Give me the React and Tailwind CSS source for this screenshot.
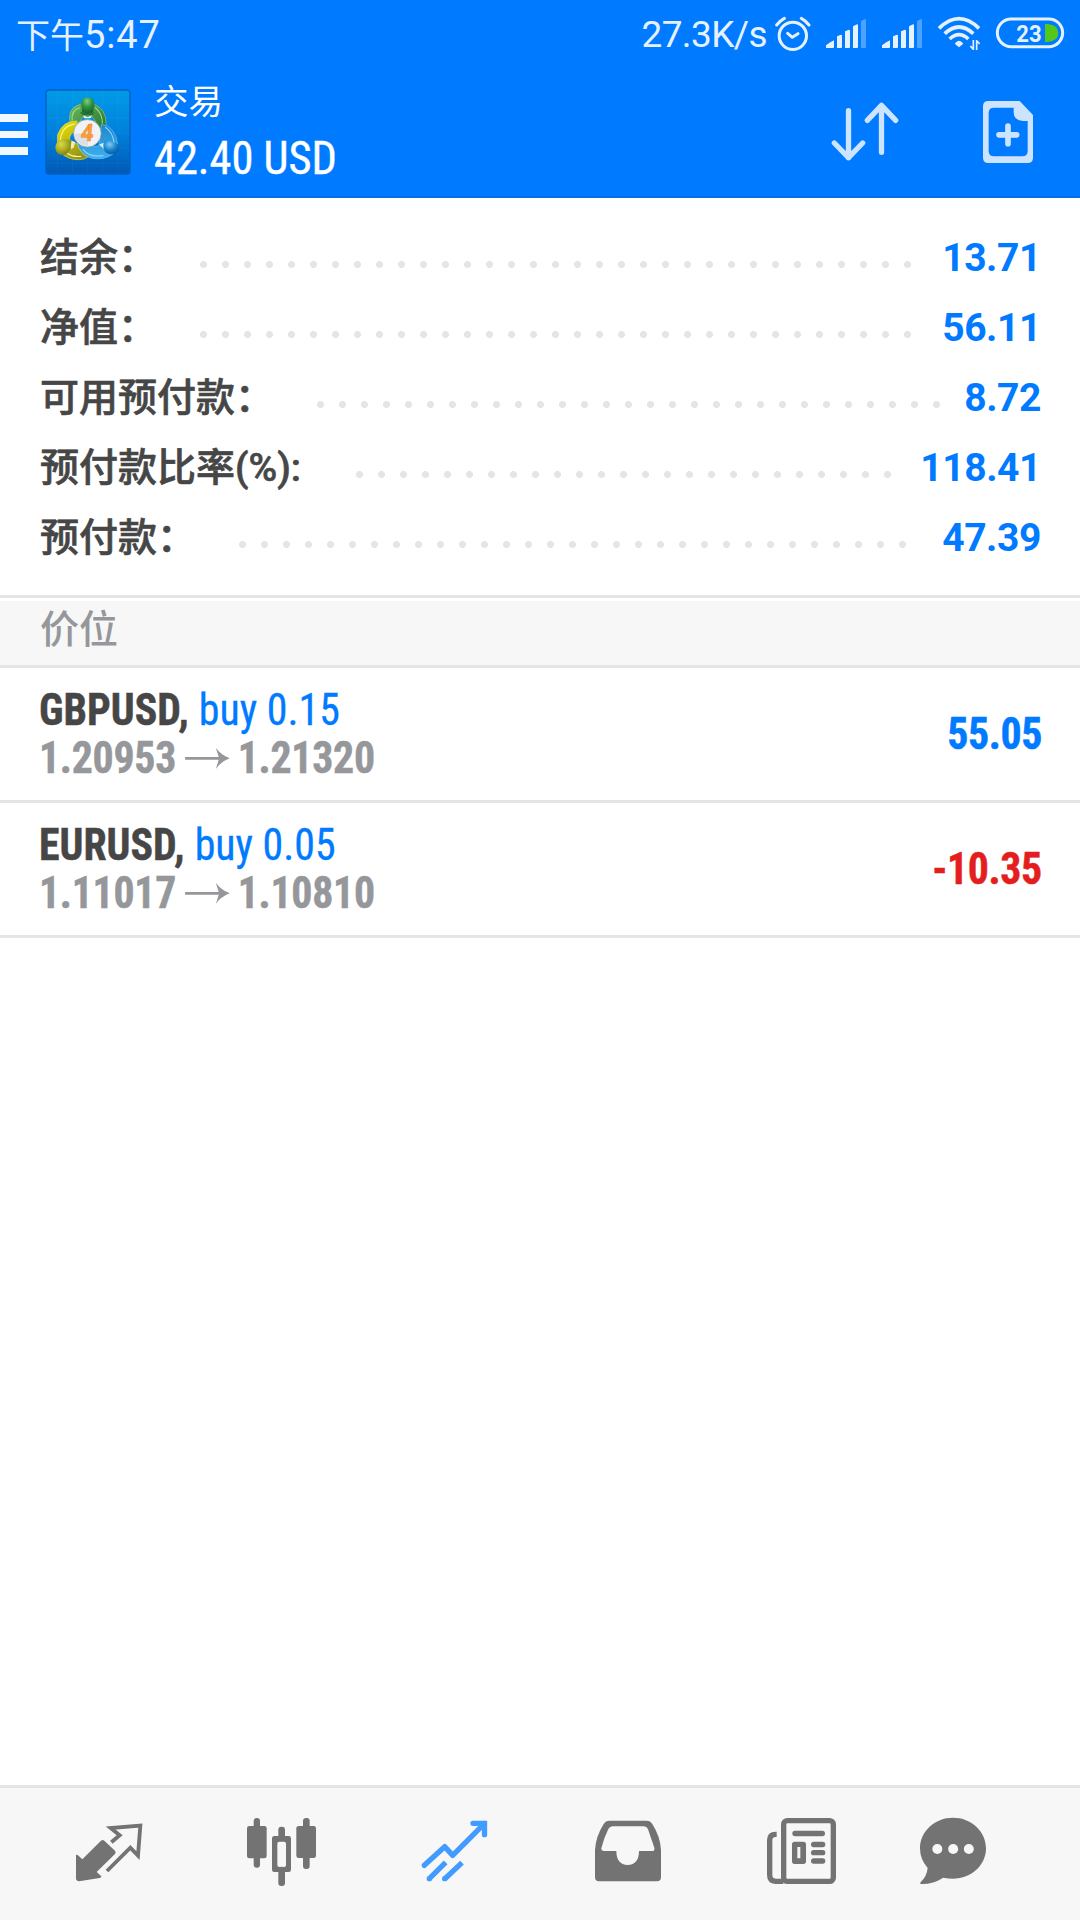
import React from "react";

const summary = [
  { label: "结余：", value: "13.71", labelWidth: "w-[160px]", dotsWidth: "w-[711px]" },
  { label: "净值：", value: "56.11", labelWidth: "w-[160px]", dotsWidth: "w-[711px]" },
  { label: "可用预付款：", value: "8.72", labelWidth: "w-[277px]", dotsWidth: "w-[623px]" },
  { label: "预付款比率(%):", value: "118.41", labelWidth: "w-[316px]", dotsWidth: "w-[535px]" },
  { label: "预付款：", value: "47.39", labelWidth: "w-[199px]", dotsWidth: "w-[667px]" },
];

const positions = [
  { symbol: "GBPUSD", side: "buy 0.15", open: "1.20953", current: "1.21320", profit: "55.05" },
  { symbol: "EURUSD", side: "buy 0.05", open: "1.11017", current: "1.10810", profit: "-10.35" },
];

function AlarmIcon() {
  return (
    <svg viewBox="462 42 111 111" className="h-[37px] w-[37px]" fill="none" stroke="#e5f1ff" strokeWidth="9" strokeLinecap="round" strokeLinejoin="round">
      <circle cx="518.5" cy="104.5" r="41" />
      <path d="M503 97 L517 109 L534 98" />
      <path d="M470 72 Q480 59 493 52 M544 52 Q557 59 567 72" />
    </svg>
  );
}

function SignalIcon() {
  return (
    <svg viewBox="615 51 126 93" className="h-[31px] w-[42px]" fill="#e5f1ff">
      <path d="M618 141 V133 Q630 123 642 118 V138 Q642 141 639 141 Z" />
      <path d="M651 141 V106 L663 101 Q666 101 666 104 V138 Q666 141 663 141 Z" />
      <path d="M675 141 V91 L687 86 Q690 86 690 89 V138 Q690 141 687 141 Z" />
      <path d="M699 141 V76 L711 70 Q714 70 714 73 V138 Q714 141 711 141 Z" />
      <path d="M723 141 V60 L735 54 Q738 54 738 57 V138 Q738 141 735 141 Z" fill="#4da2ff" />
    </svg>
  );
}

function WifiIcon() {
  return (
    <svg viewBox="951 48 132 108" className="h-[36px] w-[44px]" fill="none" stroke="#e5f1ff">
      <path d="M957 88 Q1017 30 1077 88" strokeWidth="11" />
      <path d="M974 104 Q1017 64 1060 104" strokeWidth="11" />
      <path d="M989 120 Q1017 94 1045 120" strokeWidth="11" />
      <path d="M1004 134 Q1017 117 1030 134 L1017 145 Z" fill="#e5f1ff" stroke="none" />
      <path d="M1060 123 V153 M1060 151 L1051 141 M1070 153 V123 M1070 125 L1079 135" strokeWidth="5" />
    </svg>
  );
}

function BatteryIcon() {
  return (
    <svg viewBox="1125 48 210 102" className="h-[34px] w-[70px]">
      <rect x="1132" y="57" width="196" height="83" rx="41.5" fill="none" stroke="#e5f1ff" strokeWidth="9" />
      <path d="M1275 72 H1283 Q1315 75 1315 99 Q1315 123 1283 126 H1275 Z" fill="#55c718" />
      <text x="1189" y="125" fontSize="72" fontWeight="700" fill="#e5f1ff" fontFamily="Roboto, sans-serif" textLength="76" lengthAdjust="spacingAndGlyphs">
        23
      </text>
    </svg>
  );
}

function Logo() {
  return (
    <svg viewBox="47 43 256 256" className="h-[86px] w-[86px]">
      <defs>
        <linearGradient id="tile" x1="0" y1="0" x2="0" y2="1">
          <stop offset="0" stopColor="#009be8" />
          <stop offset="0.5" stopColor="#0081dc" />
          <stop offset="1" stopColor="#0059b4" />
        </linearGradient>
        <linearGradient id="green" x1="0" y1="0" x2="1" y2="1">
          <stop offset="0" stopColor="#6cba5e" />
          <stop offset="1" stopColor="#1c6b2a" />
        </linearGradient>
        <linearGradient id="yellow" x1="0" y1="0" x2="0.6" y2="1">
          <stop offset="0" stopColor="#f3e600" />
          <stop offset="1" stopColor="#94951c" />
        </linearGradient>
        <linearGradient id="sky" x1="0" y1="0" x2="0" y2="1">
          <stop offset="0" stopColor="#1c86cf" />
          <stop offset="1" stopColor="#3fb0ee" />
        </linearGradient>
        <radialGradient id="greenBall" cx="0.45" cy="0.25" r="0.75">
          <stop offset="0" stopColor="#7fcf7d" />
          <stop offset="0.5" stopColor="#319343" />
          <stop offset="1" stopColor="#17652a" />
        </radialGradient>
        <radialGradient id="yellowBall" cx="0.35" cy="0.3" r="0.8">
          <stop offset="0" stopColor="#dbd94a" />
          <stop offset="0.5" stopColor="#aead20" />
          <stop offset="1" stopColor="#6c731c" />
        </radialGradient>
        <radialGradient id="skyBall" cx="0.4" cy="0.3" r="0.8">
          <stop offset="0" stopColor="#7fcdf7" />
          <stop offset="0.5" stopColor="#1a86ce" />
          <stop offset="1" stopColor="#064f94" />
        </radialGradient>
      </defs>
      <rect x="50" y="46" width="250" height="250" rx="9" fill="url(#tile)" stroke="#0060bd" strokeWidth="4" />
      <path d="M84 49 V293 M129 49 V293 M174 49 V293 M219 49 V293 M264 49 V293 M53 84 H297 M53 129 H297 M53 174 H297 M53 219 H297 M53 264 H297" stroke="#fff" strokeOpacity="0.06" strokeWidth="2" />
      <path d="M124 152 Q108 100 153 88 H191 Q230 102 229 148 Q226 170 209 188 L198 142 Q190 122 174 122 Q158 122 150 142 Z" fill="url(#green)" stroke="#8cc984" strokeWidth="2" />
      <path d="M128 137 Q124 106 151 99 M196 98 Q218 115 218 146" fill="none" stroke="#a5d898" strokeWidth="3" />
      <path d="M215 148 Q258 155 263 209 Q260 240 222 249 Q182 256 159 235 Q146 220 143 203 L170 214 L207 213 Z" fill="url(#sky)" stroke="#6cc0ee" strokeWidth="2" />
      <path d="M226 157 Q249 170 253 205 M160 222 Q178 248 221 241" fill="none" stroke="#8fd6fa" strokeWidth="3" />
      <path d="M142 138 Q99 137 84 181 V217 Q99 248 136 253 Q165 255 174 245 Q151 233 143 207 L120 194 Q119 178 143 160 Z" fill="url(#yellow)" stroke="#dcd75c" strokeWidth="2" />
      <path d="M93 195 Q96 153 136 147 M111 233 Q133 248 155 243" fill="none" stroke="#fffb9a" strokeWidth="3" />
      <path d="M160 121 L151 112 H195 L186 122 Z" fill="#26722f" />
      <path d="M160 121 L174 126 L187 121 L183 130 H164 Z" fill="#e5f4da" />
      <path d="M123 196 L137 201 L132 218 L124 222 Z" fill="#eff0b8" />
      <path d="M223 222 L208 208 L222 203 Z" fill="#d2f1ff" />
      <path d="M154 88 Q153 69 174 68 Q196 70 194 91 Q190 101 191 110 Q174 119 157 110 Q159 100 154 88 Z" fill="url(#greenBall)" />
      <path d="M78 221 Q76 201 95 194 Q108 191 126 196 L123 219 Q116 239 98 240 Q81 238 78 221 Z" fill="url(#yellowBall)" />
      <path d="M221 207 Q223 195 241 196 L266 208 Q272 230 251 236 Q226 241 221 218 Z" fill="url(#skyBall)" />
      <circle cx="173" cy="175" r="41" fill="#f1f2f7" stroke="#8d9d8d" strokeWidth="2" />
      <path d="M134 177 L173 173 L176 213 Q141 212 134 177 Z" fill="#dcdee8" />
      <text transform="translate(152 199) skewX(-5)" fontSize="71" fontWeight="700" fill="#fba13b" stroke="#f0862c" strokeWidth="1.5" fontFamily="Roboto, sans-serif" textLength="38" lengthAdjust="spacingAndGlyphs">
        4
      </text>
    </svg>
  );
}

function SortIcon() {
  return (
    <svg viewBox="627 300 216 192" className="h-[64px] w-[72px]" fill="none" stroke="#cce4ff" strokeWidth="16" strokeLinecap="round" strokeLinejoin="round">
      <path d="M685.5 332 V473 M643 429 L685.5 473 L728 429" />
      <path d="M784.5 457 V316 M742 361 L784.5 316 L827 361" />
    </svg>
  );
}

function NewOrderIcon() {
  return (
    <svg viewBox="1083 300 162 192" className="h-[64px] w-[54px]" fill="#cce4ff">
      <path fillRule="evenodd" d="M1105 303 H1199 L1239 345 V473 Q1239 489 1223 489 H1105 Q1089 489 1089 473 V319 Q1089 303 1105 303 Z M1181 323 H1122 Q1106 323 1106 339 V453 Q1106 469 1122 469 H1207 Q1223 469 1223 453 V363 H1210 Q1181 362 1181 335 Z" />
      <path d="M1164 378 V431 M1137 404.5 H1190" stroke="#cce4ff" strokeWidth="17" strokeLinecap="round" />
    </svg>
  );
}

function ArrowIcon() {
  return (
    <svg viewBox="555 498 140 66" preserveAspectRatio="none" className="ml-[2px] h-[22px] w-[50.2px]" fill="#95979b">
      <path d="M558 528 H659 L650 500 Q664 520 692 532 Q664 543 650 564 L659 536.5 H558 Z" />
    </svg>
  );
}

function QuotesTab() {
  return (
    <svg viewBox="99 138 216 216" className="h-[72px] w-[72px]" fill="#737373">
      <path d="M108 254 L113 255 L127 268 L183 212 Q188 208 193 212 L225 242 Q229 247 225 252 L170 306 L184 319 Q185 323 179 324 L117 334 Q108 333 108 325 Z" />
      <path d="M214 217 L239 196 L212 174 L301 167 L294 257 L271 233 L201 303" fill="none" stroke="#737373" strokeWidth="11.5" />
    </svg>
  );
}

function ChartTab() {
  return (
    <svg viewBox="618 138 216 216" className="h-[72px] w-[72px]" fill="#737373">
      <rect x="641" y="144" width="19" height="149" rx="9" />
      <rect x="621" y="168" width="59" height="97" rx="7" />
      <rect x="789" y="144" width="20" height="153" rx="9" />
      <rect x="769" y="168" width="59" height="96" rx="7" />
      <rect x="715" y="170" width="20" height="40" rx="9" />
      <rect x="715" y="290" width="20" height="58" rx="9" />
      <path fillRule="evenodd" d="M703 198 H746 Q753 198 753 205 V299 Q753 306 746 306 H703 Q696 306 696 299 V205 Q696 198 703 198 Z M718 215 Q712 215 712 221 V285 Q712 291 718 291 H732 Q738 291 738 285 V221 Q738 215 732 215 Z" />
    </svg>
  );
}

function TradeTab() {
  return (
    <svg viewBox="87 138 216 216" className="h-[72px] w-[72px]" fill="none" stroke="#429cff" strokeWidth="16">
      <path d="M103 286 L164 230 L188 256 L283 161" strokeLinejoin="round" strokeLinecap="round" />
      <path d="M249 160 H283.5 V194" strokeLinecap="round" />
      <path d="M167 277 L118 326 M216 278 L164 327" />
      <circle cx="118" cy="326" r="8" fill="#429cff" stroke="none" />
      <circle cx="164" cy="326" r="8" fill="#429cff" stroke="none" />
    </svg>
  );
}

function HistoryTab() {
  return (
    <svg viewBox="606 138 216 216" className="h-[72px] w-[72px]" fill="#737373">
      <path
        fillRule="evenodd"
        d="M658 152 H770 Q781 152 787 162 Q811 200 813 240 V322 Q813 334 801 334 H627 Q615 334 615 322 V240 Q617 200 641 162 Q647 152 658 152 Z M668 169 Q659 169 655 177 Q642 203 634 235 Q634 243 642 243 H679 Q679 284 713 285 Q747 284 747 243 H786 Q795 243 793 233 L774 178 Q770 169 760 169 Z"
      />
    </svg>
  );
}

function NewsTab() {
  return (
    <svg viewBox="105 138 216 216" className="h-[72px] w-[72px]" fill="none" stroke="#737373" strokeWidth="16">
      <rect x="161" y="152" width="149" height="182" rx="11" />
      <path d="M140 193 H137 Q119 193 119 210 V315 Q119 333 137 334 H160" />
      <path d="M195 190.5 H277 M251 223.5 H278 M251 248 H278 M251 273 H278" strokeLinecap="round" />
      <path fill="#737373" stroke="none" fillRule="evenodd" d="M194 215 H220 Q228 215 228 223 V274 Q228 282 220 282 H194 Q186 282 186 274 V223 Q186 215 194 215 Z M202 231 V265 H211 V231 Z" />
    </svg>
  );
}

function ChatTab() {
  return (
    <svg viewBox="561 138 216 216" className="-ml-[21px] h-[72px] w-[72px]" fill="#737373">
      <path d="M669 143 C724 143 768 184 768 235 C768 286 724 326 669 326 Q654 326 640 323 Q608 343 574 342 Q567 341 573 335 Q590 320 593 294 Q570 268 570 235 C570 184 614 143 669 143 Z" />
      <circle cx="622" cy="237" r="15" fill="#f7f7f7" />
      <circle cx="669.5" cy="237" r="15" fill="#f7f7f7" />
      <circle cx="716.5" cy="237" r="15" fill="#f7f7f7" />
    </svg>
  );
}

function SummaryRow({ label, value, labelWidth, dotsWidth }) {
  return (
    <div className="flex h-[70px] items-start text-[39px] leading-[70px]">
      <span className={`${labelWidth} shrink-0 whitespace-nowrap font-medium text-[#464646] [-webkit-text-stroke:0.6px_#464646]`}>{label}</span>
      <span
        className={`${dotsWidth} mt-[38px] h-[7px] shrink-0 bg-[radial-gradient(circle_at_3.5px_3.5px,#e5e5e5_3.2px,transparent_3.8px)] bg-[length:22px_7px] bg-repeat-x`}
      />
      <span className="ml-auto font-bold tracking-[-0.4px] text-[#007aff]">{value}</span>
    </div>
  );
}

function PositionRow({ symbol, side, open, current, profit }) {
  const profitColor = profit.startsWith("-") ? "text-[#e41e1e]" : "text-[#007aff]";

  return (
    <div className="flex h-[135px] items-center justify-between border-b-[3px] border-[#e5e5e5] pr-[38px] pl-[39px] text-[45px] font-stretch-condensed">
      <div className="origin-left scale-x-[0.93] leading-[48px]">
        <div className="flex gap-[11px]">
          <span className="font-bold text-[#464646] [-webkit-text-stroke:0.5px_#464646]">{symbol},</span>
          <span className="text-[#007aff] [-webkit-text-stroke:0.3px_#007aff]">{side}</span>
        </div>
        <div className="flex items-center gap-[7px] font-bold tracking-[-0.3px] text-[#95979b]">
          <span className="[-webkit-text-stroke:0.5px_#95979b]">{open}</span>
          <ArrowIcon />
          <span className="[-webkit-text-stroke:0.5px_#95979b]">{current}</span>
        </div>
      </div>
      <span className={`${profitColor} origin-right scale-x-[0.93] font-bold tracking-[-0.4px] [-webkit-text-stroke:0.5px_currentColor]`}>{profit}</span>
    </div>
  );
}

export default function App() {
  return (
    <div className="flex h-[1920px] w-[1080px] flex-col overflow-hidden bg-white font-['Roboto','Noto_Sans_CJK_SC',sans-serif]">
      <header className="h-[198px] border-b-2 border-[#006fe8] bg-[#007aff]">
        <div className="flex h-[66px] items-center pr-[15px] pl-[16px] text-[#e5f1ff]">
          <span className="flex items-baseline pt-[4px] leading-[68px]">
            <span className="text-[34px]">下午</span>
            <span className="text-[38px] tracking-[0.9px]">5:47</span>
          </span>
          <span className="ml-auto pt-[4px] text-[37px] leading-[68px] tracking-[-0.6px]">27.3K/s</span>
          <div className="ml-[7px] flex items-center">
            <AlarmIcon />
          </div>
          <div className="ml-[14px] flex gap-[14px]">
            <SignalIcon />
            <SignalIcon />
          </div>
          <div className="ml-[14px] flex items-center gap-[14px]">
            <WifiIcon />
            <BatteryIcon />
          </div>
        </div>

        <div className="flex h-[130px] items-start text-white">
          <div className="mt-[48px] flex w-[28px] flex-col gap-[9px]">
            <span className="h-[7.5px] bg-[#f0f7ff]" />
            <span className="h-[7.5px] bg-[#f0f7ff]" />
            <span className="h-[7.5px] bg-[#f0f7ff]" />
          </div>
          <div className="mt-[23px] ml-[17px]">
            <Logo />
          </div>
          <div className="mt-[16px] ml-[23px]">
            <div className="text-[34.5px] leading-[40px]">交易</div>
            <div className="mt-[8px] origin-left scale-x-[0.945] text-[47px] leading-[56px] font-stretch-condensed [-webkit-text-stroke:0.4px_white]">42.40 USD</div>
          </div>
          <div className="mt-[34px] mr-[45px] ml-auto flex gap-[80px]">
            <SortIcon />
            <NewOrderIcon />
          </div>
        </div>
      </header>

      <section className="pt-[25px] pr-[39px] pb-[22px] pl-[40px]">
        {summary.map((row) => (
          <SummaryRow key={row.label} {...row} />
        ))}
      </section>

      <div className="border-t-[3px] border-b-[3px] border-[#e5e5e5] pt-[3px]">
        <div className="h-[64px] bg-[#f7f7f7] pl-[40px] text-[39px] leading-[58px] font-medium text-[#95979b]">价位</div>
      </div>

      {positions.map((position) => (
        <PositionRow key={position.symbol} {...position} />
      ))}

      <nav className="mt-auto flex h-[135px] gap-[101px] border-t-[3px] border-[#e5e5e5] bg-[#f7f7f7] pt-[28px] pl-[73px]">
        <QuotesTab />
        <ChartTab />
        <TradeTab />
        <HistoryTab />
        <NewsTab />
        <ChatTab />
      </nav>
    </div>
  );
}
